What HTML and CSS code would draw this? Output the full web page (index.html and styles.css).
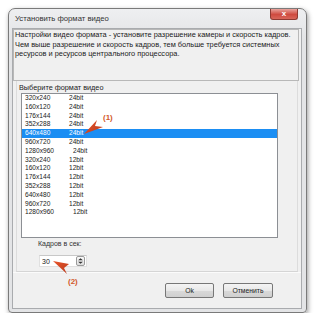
FILE: index.html
```html
<!DOCTYPE html>
<html><head><meta charset="utf-8"><title>Установить формат видео</title>
<link rel="stylesheet" href="styles.css">
</head><body>
<div class="window">
   <div class="titlebar">
      <span class="title">Установить формат видео</span>
      <span class="close">x</span>
   </div>
   <div class="client">
      <div class="desc">Настройки видео формата - установите разрешение камеры и скорость кадров.
Чем выше разрешение и скорость кадров, тем больше требуется системных ресурсов и ресурсов центрального процессора.</div>
      <div class="panel">
         <div class="group-label">Выберите формат видео</div>
         <div class="list">
            <div class="row"><span class="res">320x240</span><span>24bit</span></div>
            <div class="row"><span class="res">160x120</span><span>24bit</span></div>
            <div class="row"><span class="res">176x144</span><span>24bit</span></div>
            <div class="row"><span class="res">352x288</span><span>24bit</span></div>
            <div class="row sel"><span class="res">640x480</span><span>24bit</span></div>
            <div class="row"><span class="res">960x720</span><span>24bit</span></div>
            <div class="row"><span class="res wide">1280x960</span><span>24bit</span></div>
            <div class="row"><span class="res">320x240</span><span>12bit</span></div>
            <div class="row"><span class="res">160x120</span><span>12bit</span></div>
            <div class="row"><span class="res">176x144</span><span>12bit</span></div>
            <div class="row"><span class="res">352x288</span><span>12bit</span></div>
            <div class="row"><span class="res">640x480</span><span>12bit</span></div>
            <div class="row"><span class="res">960x720</span><span>12bit</span></div>
            <div class="row"><span class="res wide">1280x960</span><span>12bit</span></div>
         </div>
         <div class="fps-label">Кадров в сек:</div>
         <div class="spin">
            <span class="val">30</span>
            <span class="spin-btn">
               <svg width="8" height="10" viewBox="0 0 8 10">
                  <path d="M4 1.5 L7 4.2 L1 4.2 Z M1 5.8 L7 5.8 L4 8.5 Z" fill="#333"/>
               </svg>
            </span>
         </div>
      </div>
      <div class="buttons">
         <div class="btn">Ok</div>
         <div class="btn">Отменить</div>
      </div>
   </div>
</div>

<svg class="marks" width="315" height="320" viewBox="0 0 315 320">
   <defs>
      <linearGradient id="dart" x1="0" y1="0" x2="1" y2="1">
         <stop offset="0" stop-color="#e8552a"/>
         <stop offset="1" stop-color="#b83a1c"/>
      </linearGradient>
   </defs>
   <polygon points="84,134 97,120 95,126 103,127" fill="url(#dart)"/>
   <polygon points="53,261 69,264 64,268 67,274" fill="url(#dart)"/>
</svg>
<span class="mark mark1">(1)</span>
<span class="mark mark2">(2)</span>
</body></html>
```

FILE: styles.css
```css
body
{
	margin: 0;
	background: #fff;
	font-family: "Liberation Sans", Arial, sans-serif;
	color: #222;
}
.window
{
	position: relative;
	box-sizing: border-box;
	margin: 8px 0 0 8px;
	width: 299px;
	height: 305px;
	border: 1px solid #7a7a7a;
	border-radius: 7px 7px 4px 4px;
	background: linear-gradient(#eeeff1, #e3e4e6 30px, #e3e4e6);
	padding: 0 4px 3px 3px;
	display: flex;
	flex-direction: column;
	box-shadow: 1px 2px 5px rgba(0, 0, 0, .4);
}
.titlebar
{
	height: 19px;
	flex: none;
	display: flex;
	align-items: center;
	padding-left: 3px;
	position: relative;
}
.title { font-size: 7.7px; color: #333; }
.close
{
	position: absolute;
	right: 4px;
	top: 0;
	width: 28px;
	height: 11px;
	box-sizing: border-box;
	border: 1px solid #8e3a32;
	border-top: none;
	border-radius: 0 0 3px 3px;
	background: linear-gradient(#e9a49d, #cf4b40 55%, #d8665a);
	color: #fff;
	font-size: 8px;
	font-weight: bold;
	line-height: 9px;
	text-align: center;
}
.client
{
	flex: 1;
	display: flex;
	flex-direction: column;
	border: 1px solid #a9abae;
	background: #f0f0f0;
}
.desc
{
	height: 52px;
	box-sizing: border-box;
	margin-right: 2px;
	border: 1px solid #b8b8b8;
	padding: 0 1px;
	font-size: 7.4px;
	line-height: 9.5px;
	white-space: pre-line;
	color: #1a1a1a;
}
.panel
{
	height: 191px;
	box-sizing: border-box;
	margin: 0 3px 0 3px;
	border-left: 1px solid #dcdcdc;
	border-right: 1px solid #dcdcdc;
	border-bottom: 1px solid #d5d5d5;
	padding-top: 2px;
}
.group-label
{
	font-size: 7.3px;
	line-height: 9px;
	margin-left: 2px;
}
.list
{
	margin: 1px 0 0 4px;
	width: 257px;
	height: 145px;
	box-sizing: border-box;
	border: 1px solid #8c8f94;
	background: #fff;
}
.row
{
	height: 8.8px;
	line-height: 8.8px;
	font-size: 6.6px;
	padding-left: 3px;
	white-space: nowrap;
}
.row .res { display: inline-block; width: 44px; }
.row .res.wide { width: 48px; }
.row.sel { background: #1b8ef3; color: #fff; }
.fps-label
{
	font-size: 7px;
	line-height: 9px;
	margin: 1px 0 0 21px;
	color: #333;
}
.spin
{
	margin: 7px 0 0 22px;
	width: 48px;
	height: 12px;
	box-sizing: border-box;
	border: 1px solid #e0e0e0;
	border-top-color: #c8c8c8;
	background: #fff;
	display: flex;
	align-items: center;
	justify-content: space-between;
	padding: 0 1px 0 2px;
}
.val { font-size: 7px; }
.spin-btn
{
	display: flex;
	width: 9px;
	height: 10px;
	box-sizing: border-box;
	border: 1px solid #9a9a9a;
	border-radius: 2px;
	background: linear-gradient(#fafafa, #dedede);
	align-items: center;
	justify-content: center;
}
.spin-btn svg { width: 7px; height: 8px; }
.buttons
{
	flex: 1;
	display: flex;
	justify-content: flex-end;
	gap: 9px;
	padding: 10px 28px 0 0;
	border-top: 1px solid #fbfbfb;
}
.btn
{
	width: 49px;
	height: 15px;
	box-sizing: border-box;
	border: 1px solid #777;
	border-radius: 2px;
	background: linear-gradient(#f4f4f4, #e8e8e8 50%, #d9d9d9 51%, #d0d0d0);
	font-size: 6.8px;
	line-height: 13px;
	text-align: center;
	color: #222;
}
.btn + .btn { width: 50px; }
.marks { position: absolute; left: 0; top: 0; }
.mark
{
	position: absolute;
	font-size: 8px;
	font-weight: bold;
	color: #d2592b;
	line-height: 10px;
}
.mark1 { left: 103px; top: 113px; }
.mark2 { left: 68px; top: 277px; }
```
